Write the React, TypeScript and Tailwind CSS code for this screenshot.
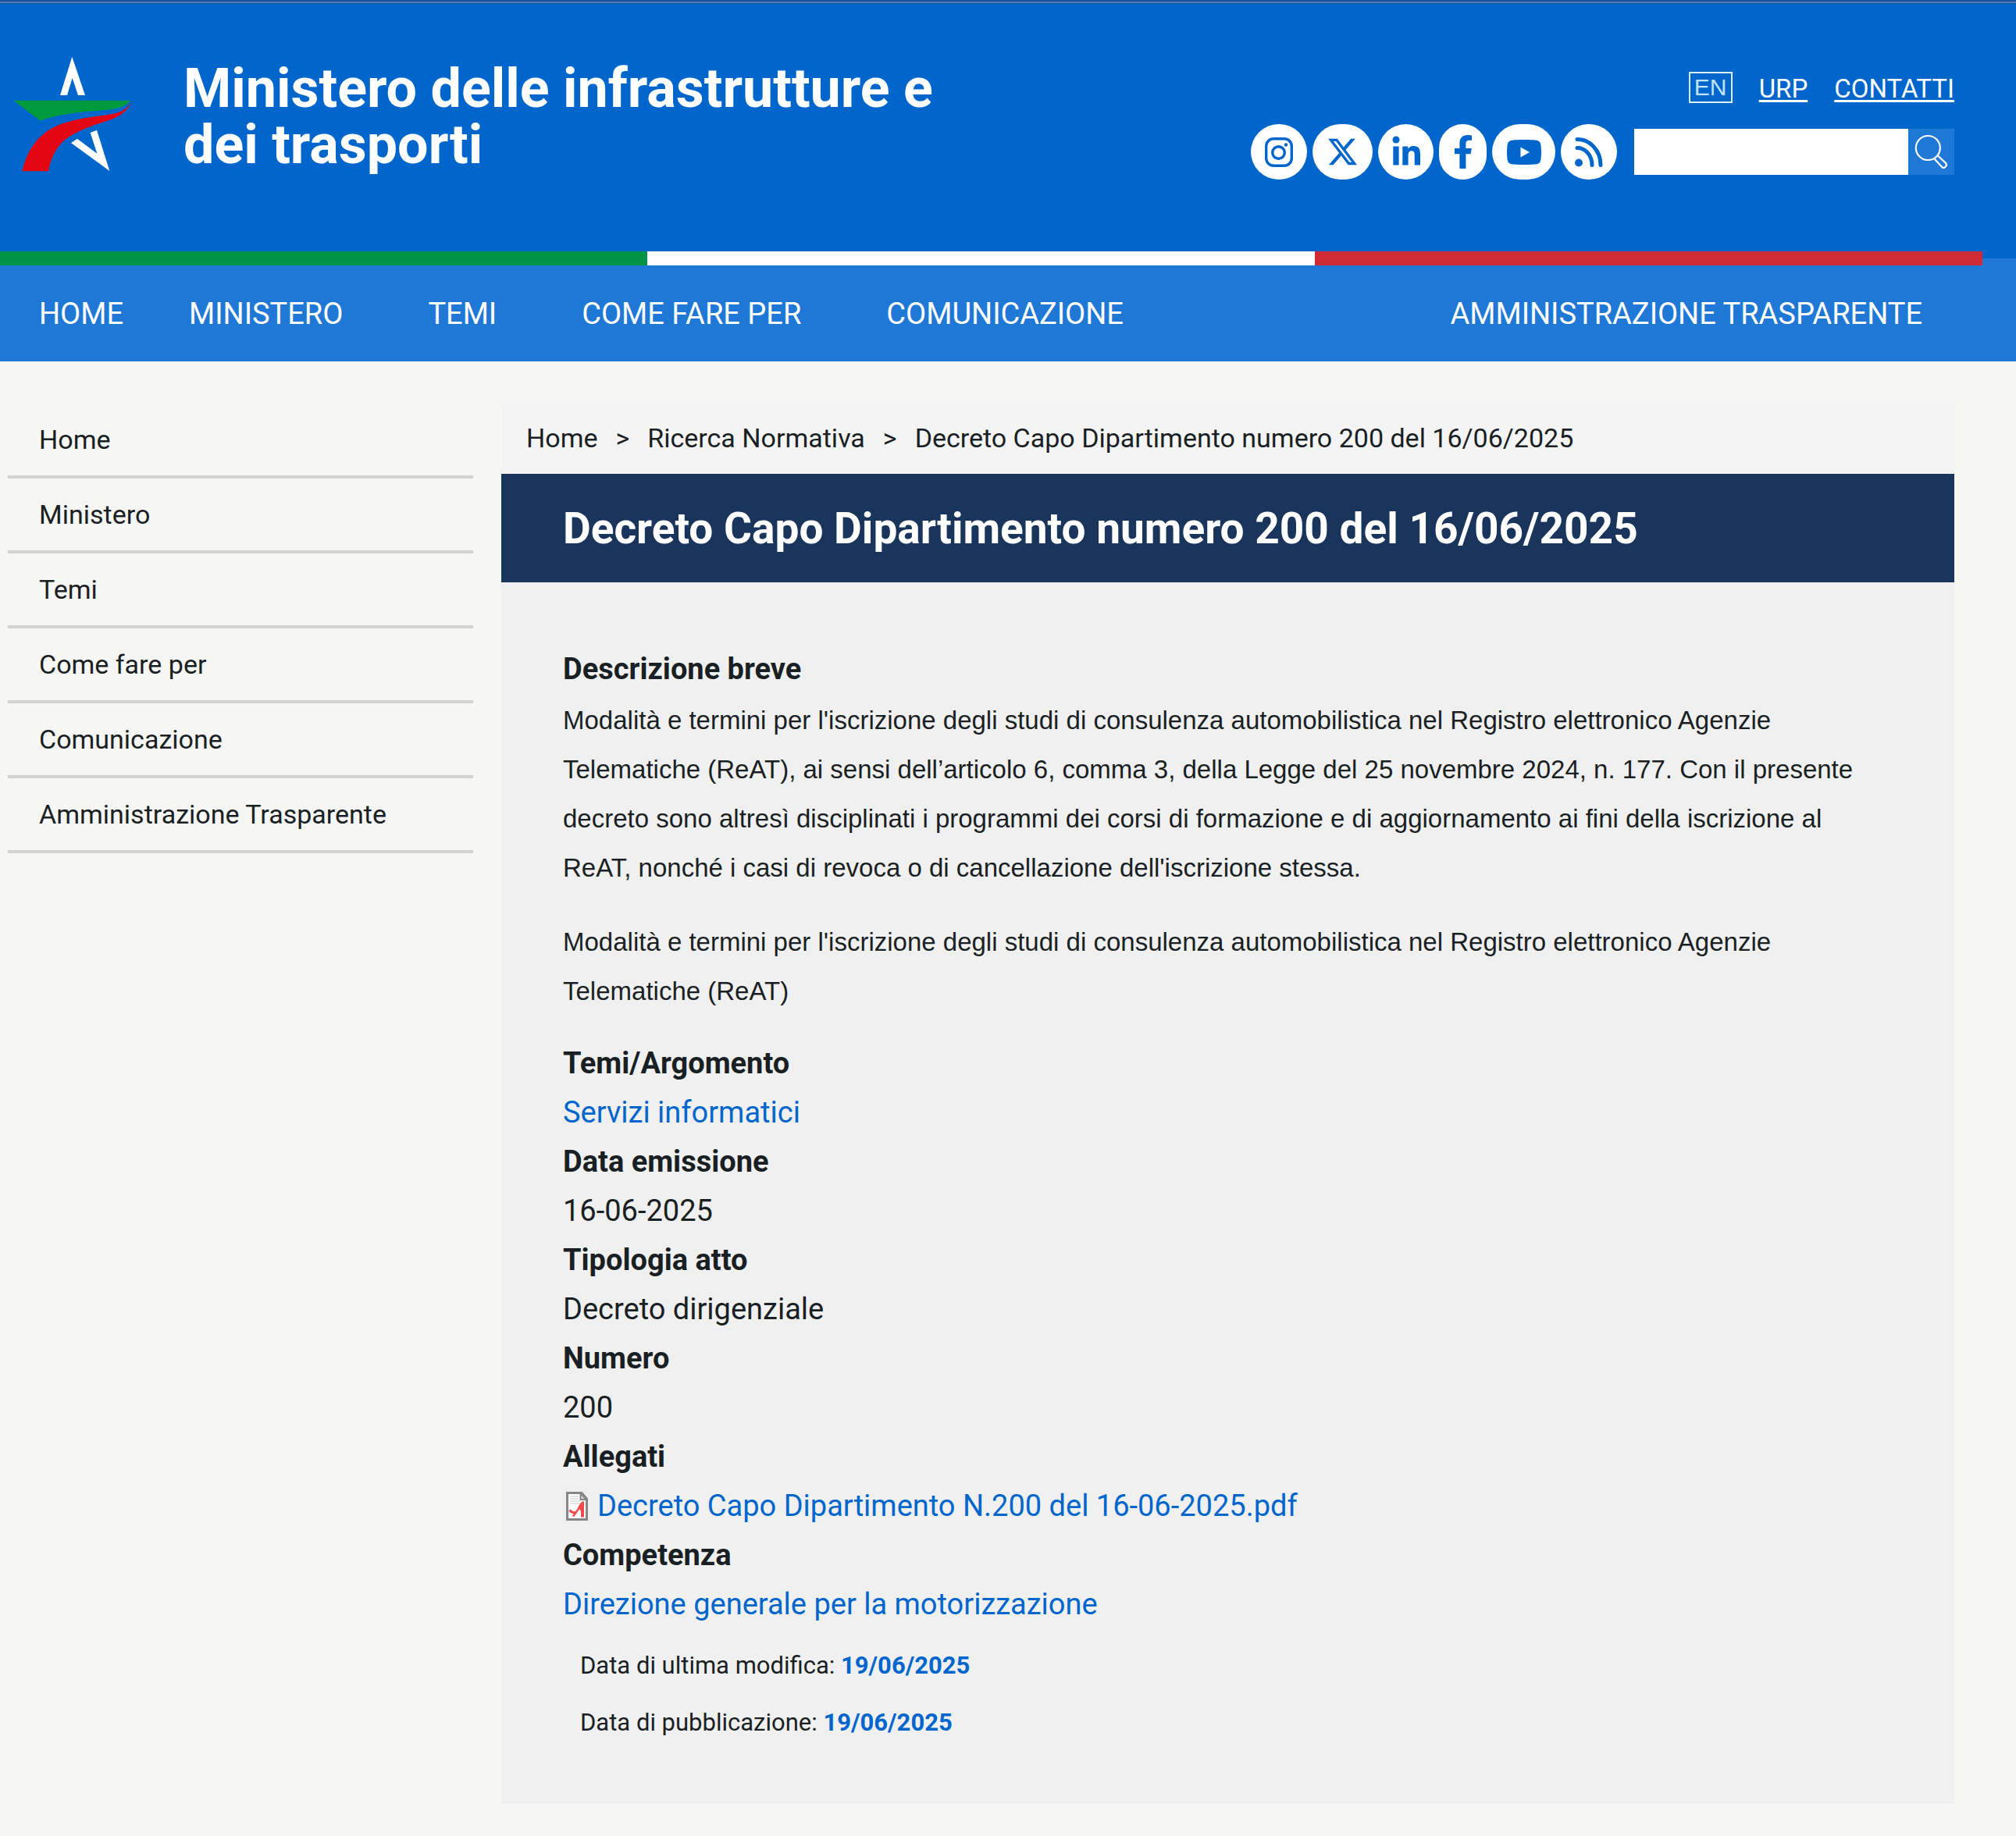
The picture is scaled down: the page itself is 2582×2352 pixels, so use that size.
import type { ReactNode } from "react";

const TITLE = "Decreto Capo Dipartimento numero 200 del 16/06/2025";

const NAV_LINKS = ["MINISTERO", "TEMI", "COME FARE PER", "COMUNICAZIONE"];

const SIDE_LINKS = [
  "Home",
  "Ministero",
  "Temi",
  "Come fare per",
  "Comunicazione",
  "Amministrazione Trasparente",
];

function Logo() {
  return (
    <svg viewBox="0 0 540 510" className="mt-[55px] h-[170px] w-[180px] shrink-0" role="img" aria-label="Logo del Ministero">
      <path fill="#fff" d="M247 38L201 186H228L248 120L270 186H297Z" />
      <path fill="#009b3e" d="M22 206H472C450 232 420 238 380 242C290 249 190 258 125 284Z" />
      <path
        fill="#e30613"
        d="M478 208C452 250 420 257 370 263C270 275 200 290 150 325C95 365 68 420 55 478H157C162 440 180 390 222 355C280 312 340 300 400 278C440 263 462 242 478 208Z"
      />
      <path fill="#fff" d="M317 330L342 320L391 477L243 369L267 353L343 410Z" />
    </svg>
  );
}

const SOCIAL: { name: string; width: string; icon: ReactNode }[] = [
  {
    name: "Instagram",
    width: "w-[72px]",
    icon: (
      <svg viewBox="0 0 36 38" className="h-[38px] w-9" fill="none" stroke="currentColor" strokeWidth="3.4" aria-hidden="true">
        <rect x="1.7" y="1.7" width="32.600" height="34.600" rx="9.5" />
        <circle cx="17.500" cy="19.500" r="7.8" />
        <circle cx="27" cy="9.500" r="2.2" fill="currentColor" stroke="none" />
      </svg>
    ),
  },
  {
    name: "X",
    width: "w-[77px]",
    icon: (
      <svg viewBox="0 0 512 512" className="size-[41px]" fill="currentColor" aria-hidden="true">
        <path d="M389.200 48h70.600L305.600 224.200 487 464H345L233.700 318.600 106.500 464H35.800L200.700 275.500 26.800 48H172.400L272.900 180.900 389.200 48zM364.400 421.800h39.100L151.100 88h-42L364.400 421.800z" />
      </svg>
    ),
  },
  {
    name: "LinkedIn",
    width: "w-[71px]",
    icon: (
      <svg viewBox="0 0 36 38" className="mb-1 h-[38px] w-9" fill="currentColor" aria-hidden="true">
        <circle cx="5" cy="5" r="4.500" />
        <path d="M1.300 13.500H8.600V37.500H1.300ZM13.300 13.500H20.300V16.800C21.800 14.400 24.300 12.900 27.400 12.900C33.800 12.900 36 16.800 36 23.500V37.500H28.700V25.200C28.700 21.800 28.200 19.200 24.900 19.200C21.700 19.200 20.600 21.600 20.600 25V37.500H13.300Z" />
      </svg>
    ),
  },
  {
    name: "Facebook",
    width: "w-[61px]",
    icon: (
      <svg viewBox="0 0 22 43" className="h-[43px] w-[22px]" fill="currentColor" aria-hidden="true">
        <path d="M6.400 43V24.300H0V17H6.400V10.400C6.400 3.900 10.200 0 16.600 0C18.600 0 20.500 0.200 22 0.500V6.800H18.800C15.500 6.800 14.400 8.500 14.400 11V17H21.800L20.600 24.300H14.400V43Z" />
      </svg>
    ),
  },
  {
    name: "YouTube",
    width: "w-[81px]",
    icon: (
      <svg viewBox="0 0 44 32" className="h-8 w-11" aria-hidden="true">
        <path
          fill="currentColor"
          d="M22 0C30 0 36 0.300 38.800 1C41 1.600 42.400 3 43 5C43.700 7.800 44 12 44 16C44 20 43.700 24.200 43 27C42.400 29 41 30.400 38.800 31C36 31.700 30 32 22 32C14 32 8 31.700 5.200 31C3 30.400 1.600 29 1 27C0.300 24.200 0 20 0 16C0 12 0.300 7.800 1 5C1.600 3 3 1.600 5.200 1C8 0.300 14 0 22 0Z"
        />
        <path fill="#fff" d="M17.500 9.500L29 16L17.500 22.500Z" />
      </svg>
    ),
  },
  {
    name: "RSS",
    width: "w-[72px]",
    icon: (
      <svg viewBox="0 0 36 38" className="h-[38px] w-9" fill="none" stroke="currentColor" strokeWidth="5" strokeLinecap="round" aria-hidden="true">
        <path d="M3 2.500C19.500 2.500 33 17 33 35.500M3 13.500C13.500 13.500 22 23 22 35.500" />
        <circle cx="5" cy="32.500" r="5" fill="currentColor" stroke="none" />
      </svg>
    ),
  },
];

function SearchIcon() {
  return (
    <svg viewBox="0 0 59 59" className="size-full" fill="none" stroke="#fff" strokeWidth="2.200" aria-hidden="true">
      <circle cx="25.300" cy="24.500" r="15.500" />
      <path d="M33.300 38.300L42.800 48.600Q45.300 51 47.800 48.600Q50.200 46 47.800 43.600L37.900 34.500" strokeLinejoin="round" />
    </svg>
  );
}

function PdfIcon() {
  return (
    <svg viewBox="0 0 28 37" className="mx-1 h-[37px] w-7 shrink-0" aria-hidden="true">
      <path d="M1.500 1.500H20L26.500 9V35.500H1.500Z" fill="#fff" stroke="#868686" strokeWidth="3" />
      <path d="M5 6H16M5 9H16M5 12H18M5 15H18" stroke="#e4e4e4" strokeWidth="2" />
      <path d="M18.500 2V10H26Z" fill="#d8d8d8" stroke="#868686" strokeWidth="2" />
      <path d="M22.500 13C18 15 17 21 13 26C11.500 28 10.500 29.500 9 31.500" fill="none" stroke="#f0494b" strokeWidth="2.500" />
      <path d="M16.500 21.500L23 12.500V32.500H19V25Z" fill="#f0494b" />
      <path d="M4.500 23.500C7 26.500 10 27.500 13 26" fill="none" stroke="#f0494b" strokeWidth="3" />
    </svg>
  );
}

function Field({ label, children }: { label: string; children: ReactNode }) {
  return (
    <div>
      <dt className="font-bold">{label}</dt>
      <dd>{children}</dd>
    </div>
  );
}

function TextLink({ children }: { children: ReactNode }) {
  return (
    <a href="#" className="text-[#0066cc] hover:underline">
      {children}
    </a>
  );
}

function Header() {
  return (
    <header className="bg-[#0066cc] text-white">
      <div className="h-0.5 bg-[#17539c]" />
      <div className="h-0.5 bg-[#4b7cb6]" />
      <div className="h-px bg-[#17539c]" />
      <div className="flex items-start justify-between pr-[79px] pb-[101px] pl-2.5">
        <div className="flex">
          <Logo />
          <h1 className="mt-[72px] ml-[45px] w-[1000px] text-[70px] leading-[72px] font-bold">
            Ministero delle infrastrutture e dei trasporti
          </h1>
        </div>
        <div className="mt-[87px] flex flex-col items-end gap-[25px]">
          <div className="flex items-start gap-[34px] text-[33px] leading-10 decoration-[3px] underline-offset-[3px]">
            <button type="button" className="flex h-10 w-14 items-center justify-center border-2 border-[#d9efff] font-['Liberation_Sans',sans-serif] text-[30px] text-[#c3e2fb]">
              EN
            </button>
            <a href="#" className="pt-0.5 underline">URP</a>
            <a href="#" className="pt-0.5 underline">CONTATTI</a>
          </div>
          <div className="flex items-center gap-[22px]">
            <div className="flex gap-[7px]">
              {SOCIAL.map((s) => (
                <a
                  key={s.name}
                  href="#"
                  aria-label={s.name}
                  className={`flex h-[71px] items-center justify-center rounded-full bg-white text-[#0066cc] ${s.width}`}
                >
                  {s.icon}
                </a>
              ))}
            </div>
            <form className="flex h-[59px]" onSubmit={(e) => e.preventDefault()}>
              <input type="text" aria-label="Cerca nel sito" className="w-[351px] bg-white px-3 text-[33px] text-[#1a1f24] outline-none" />
              <button type="submit" aria-label="Cerca" className="size-[59px] bg-[#1f78d6]">
                <SearchIcon />
              </button>
            </form>
          </div>
        </div>
      </div>
    </header>
  );
}

function NavBar() {
  return (
    <nav aria-label="Principale" className="flex flex-col bg-[#1f78d6] text-[38px] leading-[121px] text-white">
      <div className="-mt-[9px] mr-[43px] grid h-[18px] grid-cols-[829fr_855fr_855fr]">
        <div className="bg-[#009246]" />
        <div className="bg-white" />
        <div className="bg-[#ce2b37]" />
      </div>
      <div className="flex pt-0.5 pr-[120px] pl-[50px]">
        <a href="#" className="mr-[84px]">HOME</a>
        <div className="flex gap-[109px]">
          {NAV_LINKS.map((label) => (
            <a key={label} href="#">{label}</a>
          ))}
        </div>
        <a href="#" className="ml-auto">AMMINISTRAZIONE TRASPARENTE</a>
      </div>
    </nav>
  );
}

export default function App() {
  return (
    <div className="min-h-screen bg-[#f6f6f4] font-['Roboto',sans-serif] font-normal text-[#1a1f24]">
      <Header />
      <NavBar />
      <div className="flex items-start gap-9 pt-[54px] pr-[79px] pb-[42px] pl-2.5 text-[34px]">
        <aside className="w-[596px] shrink-0">
          <ul>
            {SIDE_LINKS.map((label) => (
              <li key={label} className="border-b-4 border-[#d2d4d2]">
                <a href="#" className="block pl-10 leading-[92px]">{label}</a>
              </li>
            ))}
          </ul>
        </aside>
        <main className="min-w-0 flex-1">
          <ol className="flex gap-[23px] bg-[#f4f4f4] pb-0.5 pl-8 leading-[88px]">
            <li><a href="#">Home</a></li>
            <li aria-hidden="true">&gt;</li>
            <li><a href="#">Ricerca Normativa</a></li>
            <li aria-hidden="true">&gt;</li>
            <li>{TITLE}</li>
          </ol>
          <h2 className="bg-[#1a355b] px-[79px] pt-0.5 text-[55px] leading-[137px] font-bold text-white">{TITLE}</h2>
          <article className="bg-[#f0f0f0] px-[79px] pt-20 pb-[68px] text-[38px] leading-[63px]">
            <h3 className="font-bold">Descrizione breve</h3>
            <div className="mb-[30px] flex flex-col gap-8 pt-0.5 font-['Liberation_Sans',sans-serif] text-[33px]">
              <p>
                Modalità e termini per l'iscrizione degli studi di consulenza automobilistica nel Registro elettronico
                Agenzie Telematiche (ReAT), ai sensi dell’articolo 6, comma 3, della Legge del 25 novembre 2024, n. 177.
                Con il presente decreto sono altresì disciplinati i programmi dei corsi di formazione e di aggiornamento
                ai fini della iscrizione al ReAT, nonché i casi di revoca o di cancellazione dell'iscrizione stessa.
              </p>
              <p>
                Modalità e termini per l'iscrizione degli studi di consulenza automobilistica nel Registro elettronico
                Agenzie Telematiche (ReAT)
              </p>
            </div>
            <dl>
              <Field label="Temi/Argomento"><TextLink>Servizi informatici</TextLink></Field>
              <Field label="Data emissione">16-06-2025</Field>
              <Field label="Tipologia atto">Decreto dirigenziale</Field>
              <Field label="Numero">200</Field>
              <Field label="Allegati">
                <span className="flex items-center gap-2">
                  <PdfIcon />
                  <TextLink>Decreto Capo Dipartimento N.200 del 16-06-2025.pdf</TextLink>
                </span>
              </Field>
              <Field label="Competenza"><TextLink>Direzione generale per la motorizzazione</TextLink></Field>
            </dl>
            <div className="mt-2.5 pl-[22px] text-[31px] leading-[73px]">
              <p>Data di ultima modifica: <b className="font-bold text-[#0066cc]">19/06/2025</b></p>
              <p>Data di pubblicazione: <b className="font-bold text-[#0066cc]">19/06/2025</b></p>
            </div>
          </article>
        </main>
      </div>
    </div>
  );
}
